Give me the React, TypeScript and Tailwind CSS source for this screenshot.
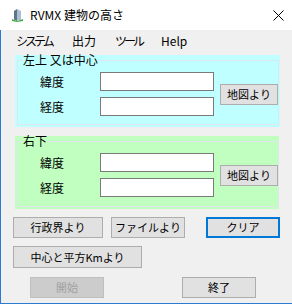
import React from 'react';

const font = { fontFamily: '"Noto Sans CJK JP", "Noto Sans", sans-serif' };

const Btn: React.FC<{ label: string; className?: string; disabled?: boolean; focused?: boolean }> = ({
  label,
  className = '',
  disabled,
  focused,
}) => (
  <button
    disabled={disabled}
    className={`flex items-center justify-center text-[11px] leading-none ${
      focused
        ? 'border-2 border-[#0078d7] bg-[#e1e1e1] text-black'
        : disabled
        ? 'border border-[#bfbfbf] bg-[#cccccc] text-[#a0a0a0]'
        : 'border border-[#adadad] bg-[#e1e1e1] text-black'
    } ${className}`}
  >
    {label}
  </button>
);

const CoordGroup: React.FC<{ title: string; bg: string; className?: string }> = ({ title, bg, className = '' }) => (
  <div className={`flex flex-col px-[2px] pb-[2px] ${bg} ${className}`}>
    <fieldset className="flex-1 border border-[#dde6ea]">
      <legend className="ml-[5px] text-[12px] leading-[10px] text-black">{title}</legend>
      <div className="flex items-center pt-[7px]">
        <div className="flex flex-col gap-[6px] pl-[22px]">
          {['緯度', '経度'].map((l) => (
            <div key={l} className="flex h-[19px] items-center">
              <span className="w-[60px] text-[12px] text-black">{l}</span>
              <div className="h-[19px] w-[114px] border border-[#7a7a7a] bg-white" />
            </div>
          ))}
        </div>
        <Btn label="地図より" className="ml-[6px] h-[21px] w-[58px]" />
      </div>
    </fieldset>
  </div>
);

export default function App() {
  return (
    <div className="h-[305px] w-[292px] overflow-hidden bg-white" style={font}>
      {/* title bar */}
      <div className="flex h-[30px] items-center bg-white">
        <svg className="ml-[12px]" width="11" height="14" viewBox="0 0 11 14">
          <polygon points="0,11 5,13 11,11 11,13 5,14 0,13" fill="#3fae3a" />
          <polygon points="2,3 5,1 5,13 2,11.5" fill="#5f7288" />
          <polygon points="5,1 9,3 9,11.5 5,13" fill="#a9bdd3" />
        </svg>
        <span className="ml-[7px] text-[12px] text-black">RVMX 建物の高さ</span>
        <svg className="ml-auto mr-[8px]" width="11" height="11" viewBox="0 0 11 11">
          <path d="M0.5 0.5 L10.5 10.5 M10.5 0.5 L0.5 10.5" stroke="#000" strokeWidth="1" />
        </svg>
      </div>

      <div className="flex h-[274px] flex-col border-b border-l border-[#2b7bd0] bg-[#f0f0f0]">
        {/* menu */}
        <div className="flex h-[22px] items-center pl-[15px] text-[12px] text-black">
          <span className="w-[56px] whitespace-nowrap tracking-[-3px]">システム</span>
          <span className="w-[43px] whitespace-nowrap">出力</span>
          <span className="w-[46px] whitespace-nowrap tracking-[-3px]">ツール</span>
          <span className="whitespace-nowrap">Help</span>
        </div>

        <CoordGroup title="左上 又は中心" bg="bg-[#c0ffff]" className="ml-[14px] mt-[3px] h-[72px] w-[265px]" />
        <CoordGroup title="右下" bg="bg-[#c0ffc0]" className="ml-[14px] mt-[9px] h-[73px] w-[264px]" />

        <div className="ml-[12px] mt-[8px] flex">
          <Btn label="行政界より" className="h-[21px] w-[90px]" />
          <Btn label="ファイルより" className="ml-[8px] h-[21px] w-[74px]" />
          <Btn label="クリア" focused className="ml-[21px] h-[21px] w-[74px]" />
        </div>
        <div className="ml-[12px] mt-[8px] flex">
          <Btn label="中心と平方Kmより" className="h-[22px] w-[129px]" />
        </div>
        <div className="ml-[29px] mt-[9px] flex">
          <Btn label="開始" disabled className="h-[21px] w-[74px]" />
          <Btn label="終了" className="ml-[78px] h-[21px] w-[74px]" />
        </div>
      </div>
    </div>
  );
}
